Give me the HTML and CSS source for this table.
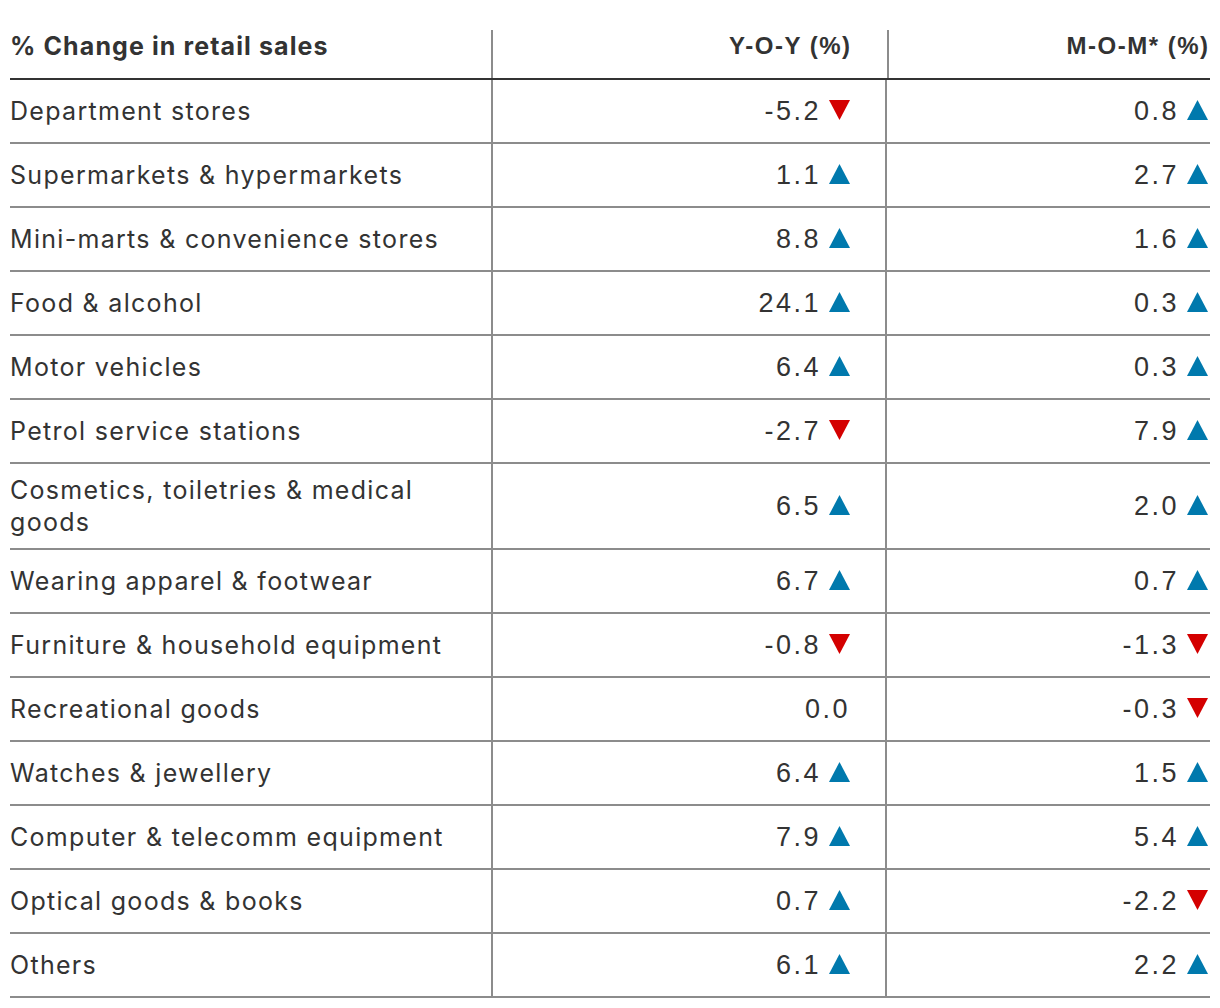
FILE: index.html
```html
<!DOCTYPE html>
<html lang="en">
<head>
<meta charset="utf-8">
<title>% Change in retail sales</title>
<link rel="stylesheet" href="styles.css">
</head>
<body>
<svg class="defs" width="0" height="0" aria-hidden="true">
  <defs>
    <symbol id="up" viewBox="0 0 21 20"><path d="M10.5 0 L21 20 L0 20 Z"/></symbol>
    <symbol id="down" viewBox="0 0 21 20"><path d="M0 0 L21 0 L10.5 20 Z"/></symbol>
  </defs>
</svg>
<div class="table">
  <div class="row head">
    <div class="cell label">% Change in retail sales</div>
    <div class="cell num yoy">Y-O-Y (%)</div>
    <div class="cell num mom">M-O-M* (%)</div>
  </div>
  <div class="row">
    <div class="cell label">Department stores</div>
    <div class="cell num yoy"><span>-5.2</span><svg class="tri down"><use href="#down"/></svg></div>
    <div class="cell num mom"><span>0.8</span><svg class="tri up"><use href="#up"/></svg></div>
  </div>
  <div class="row">
    <div class="cell label">Supermarkets &amp; hypermarkets</div>
    <div class="cell num yoy"><span>1.1</span><svg class="tri up"><use href="#up"/></svg></div>
    <div class="cell num mom"><span>2.7</span><svg class="tri up"><use href="#up"/></svg></div>
  </div>
  <div class="row">
    <div class="cell label">Mini-marts &amp; convenience stores</div>
    <div class="cell num yoy"><span>8.8</span><svg class="tri up"><use href="#up"/></svg></div>
    <div class="cell num mom"><span>1.6</span><svg class="tri up"><use href="#up"/></svg></div>
  </div>
  <div class="row">
    <div class="cell label">Food &amp; alcohol</div>
    <div class="cell num yoy"><span>24.1</span><svg class="tri up"><use href="#up"/></svg></div>
    <div class="cell num mom"><span>0.3</span><svg class="tri up"><use href="#up"/></svg></div>
  </div>
  <div class="row">
    <div class="cell label">Motor vehicles</div>
    <div class="cell num yoy"><span>6.4</span><svg class="tri up"><use href="#up"/></svg></div>
    <div class="cell num mom"><span>0.3</span><svg class="tri up"><use href="#up"/></svg></div>
  </div>
  <div class="row">
    <div class="cell label">Petrol service stations</div>
    <div class="cell num yoy"><span>-2.7</span><svg class="tri down"><use href="#down"/></svg></div>
    <div class="cell num mom"><span>7.9</span><svg class="tri up"><use href="#up"/></svg></div>
  </div>
  <div class="row">
    <div class="cell label">Cosmetics, toiletries &amp; medical goods</div>
    <div class="cell num yoy"><span>6.5</span><svg class="tri up"><use href="#up"/></svg></div>
    <div class="cell num mom"><span>2.0</span><svg class="tri up"><use href="#up"/></svg></div>
  </div>
  <div class="row">
    <div class="cell label">Wearing apparel &amp; footwear</div>
    <div class="cell num yoy"><span>6.7</span><svg class="tri up"><use href="#up"/></svg></div>
    <div class="cell num mom"><span>0.7</span><svg class="tri up"><use href="#up"/></svg></div>
  </div>
  <div class="row">
    <div class="cell label">Furniture &amp; household equipment</div>
    <div class="cell num yoy"><span>-0.8</span><svg class="tri down"><use href="#down"/></svg></div>
    <div class="cell num mom"><span>-1.3</span><svg class="tri down"><use href="#down"/></svg></div>
  </div>
  <div class="row">
    <div class="cell label">Recreational goods</div>
    <div class="cell num yoy"><span>0.0</span></div>
    <div class="cell num mom"><span>-0.3</span><svg class="tri down"><use href="#down"/></svg></div>
  </div>
  <div class="row">
    <div class="cell label">Watches &amp; jewellery</div>
    <div class="cell num yoy"><span>6.4</span><svg class="tri up"><use href="#up"/></svg></div>
    <div class="cell num mom"><span>1.5</span><svg class="tri up"><use href="#up"/></svg></div>
  </div>
  <div class="row">
    <div class="cell label">Computer &amp; telecomm equipment</div>
    <div class="cell num yoy"><span>7.9</span><svg class="tri up"><use href="#up"/></svg></div>
    <div class="cell num mom"><span>5.4</span><svg class="tri up"><use href="#up"/></svg></div>
  </div>
  <div class="row">
    <div class="cell label">Optical goods &amp; books</div>
    <div class="cell num yoy"><span>0.7</span><svg class="tri up"><use href="#up"/></svg></div>
    <div class="cell num mom"><span>-2.2</span><svg class="tri down"><use href="#down"/></svg></div>
  </div>
  <div class="row">
    <div class="cell label">Others</div>
    <div class="cell num yoy"><span>6.1</span><svg class="tri up"><use href="#up"/></svg></div>
    <div class="cell num mom"><span>2.2</span><svg class="tri up"><use href="#up"/></svg></div>
  </div>
</div>
</body>
</html>
```

FILE: styles.css
```css
html, body {
  margin: 0;
  padding: 0;
  background: #fff;
}

.defs {
  position: absolute;
  width: 0;
  height: 0;
  overflow: hidden;
}

.table {
  width: 1200px;
  margin: 30px 0 0 10px;
  color: #333;
}

.row {
  display: grid;
  grid-template-columns: 483px 394px 323px;
  min-height: 62px;
  border-bottom: 2px solid #8c8c8c;
}

.cell {
  display: flex;
  align-items: center;
  padding: 10px 0;
}

.label {
  font-family: Inter, "Noto Sans", sans-serif;
  font-size: 25px;
  line-height: 32px;
  letter-spacing: 1.3px;
  padding-right: 40px;
  border-right: 2px solid #8c8c8c;
}

.yoy {
  border-right: 2px solid #8c8c8c;
  padding-right: 35px;
}

.mom {
  padding-right: 2px;
}

.num {
  justify-content: flex-end;
  font-family: "Liberation Sans", Arial, sans-serif;
  font-size: 27px;
  letter-spacing: 2.5px;
}

.tri {
  width: 21px;
  height: 20px;
  margin-left: 8px;
  flex: none;
  align-self: center;
  position: relative;
  top: -1px;
}

.up { fill: #0079ad; }
.down { fill: #d40000; }

.head {
  min-height: 0;
  height: 48px;
  border-bottom: 2px solid #333;
}

.head .cell {
  padding-top: 0;
  padding-bottom: 0;
  align-items: flex-start;
  line-height: 32px;
}

.head .label {
  font-weight: 700;
  letter-spacing: 1.1px;
}

.head .num {
  font-weight: 700;
  font-size: 24px;
  letter-spacing: 1.5px;
  margin-right: -1.5px;
}
```
